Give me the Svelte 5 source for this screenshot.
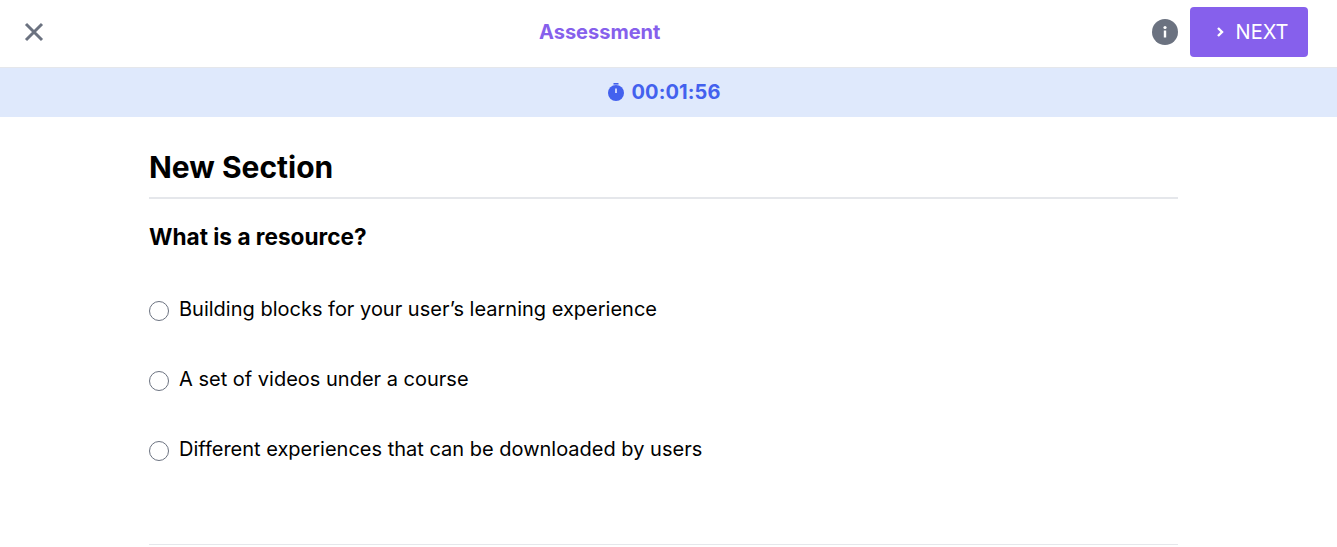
<script>
  const options = [
    'Building blocks for your user’s learning experience',
    'A set of videos under a course',
    'Different experiences that can be downloaded by users'
  ];
</script>

<div class="page">
  <header class="topbar">
    <button class="close" aria-label="Close">
      <svg width="20" height="20" viewBox="0 0 20 20"><path d="M2 2L18 18M18 2L2 18" stroke="#6b7280" stroke-width="3" fill="none" /></svg>
    </button>
    <div class="title">Assessment</div>
    <div class="actions">
      <svg class="info" width="26" height="26" viewBox="0 0 26 26">
        <circle cx="13" cy="13" r="13" fill="#6b7280" />
        <circle cx="13" cy="8.5" r="1.6" fill="#fff" />
        <rect x="11.8" y="11.5" width="2.4" height="7" fill="#fff" />
      </svg>
      <button class="next">
        <svg width="10" height="12" viewBox="0 0 10 12"><path d="M3 2l4 4-4 4" stroke="#fff" stroke-width="2.4" fill="none" /></svg>
        NEXT
      </button>
    </div>
  </header>

  <div class="timer">
    <svg width="18" height="20" viewBox="0 0 18 20">
      <rect x="6.5" y="1" width="5" height="1.6" fill="#4361ee" />
      <circle cx="9" cy="11" r="8" fill="#4361ee" />
      <rect x="8.3" y="6.5" width="1.4" height="4.5" fill="#fff" />
    </svg>
    <span>00:01:56</span>
  </div>

  <main class="content">
    <h1>New Section</h1>
    <h2>What is a resource?</h2>
    <ul class="options">
      {#each options as option}
        <li>
          <span class="radio"></span>
          <span>{option}</span>
        </li>
      {/each}
    </ul>
    <div class="rule"></div>
  </main>
</div>

<style>
  :global(body) {
    margin: 0;
    background: #fff;
    font-family: Inter, "Liberation Sans", sans-serif;
  }
  .page {
    height: 547px;
    overflow: hidden;
  }
  .topbar {
    height: 68px;
    display: flex;
    align-items: center;
    justify-content: space-between;
    padding: 0 29px 4px 24px;
    box-sizing: border-box;
    border-bottom: 1px solid #e5e7eb;
    position: relative;
  }
  .close {
    background: none;
    border: none;
    padding: 0;
    display: flex;
    cursor: pointer;
  }
  .title {
    position: absolute;
    left: 539px;
    font-size: 20px;
    font-weight: 700;
    color: #8660ec;
  }
  .actions {
    display: flex;
    align-items: center;
    gap: 12px;
  }
  .next {
    width: 118px;
    height: 50px;
    display: flex;
    align-items: center;
    justify-content: center;
    gap: 11px;
    padding: 0 0 0 5px;
    background: #8660ec;
    border: none;
    border-radius: 4px;
    color: #fff;
    font-family: inherit;
    font-size: 20px;
  }
  .timer {
    height: 49px;
    display: flex;
    align-items: center;
    justify-content: center;
    gap: 6px;
    padding: 0 9px 2px 0;
    box-sizing: border-box;
    background: #dfe9fc;
    color: #4361ee;
    font-size: 20px;
    font-weight: 700;
    letter-spacing: 0.1px;
  }
  .content {
    width: 1029px;
    margin-left: 149px;
  }
  h1 {
    margin: 0;
    padding: 32px 0 12px;
    font-size: 30px;
    line-height: 36px;
    font-weight: 700;
    color: #000;
    border-bottom: 2px solid #e5e7eb;
  }
  h2 {
    margin: 0;
    padding-top: 24px;
    font-size: 22.6px;
    line-height: 28px;
    font-weight: 700;
    color: #000;
  }
  .options {
    list-style: none;
    margin: 0;
    padding: 23px 0 0;
  }
  .options li {
    height: 70px;
    display: flex;
    align-items: center;
    gap: 10px;
    font-size: 20px;
    color: #000;
  }
  .radio {
    width: 18px;
    height: 18px;
    border: 1px solid #6b7280;
    border-radius: 50%;
    margin-top: 3px;
  }
  .rule {
    height: 1px;
    background: #e5e7eb;
    margin-top: 60px;
  }
</style>
